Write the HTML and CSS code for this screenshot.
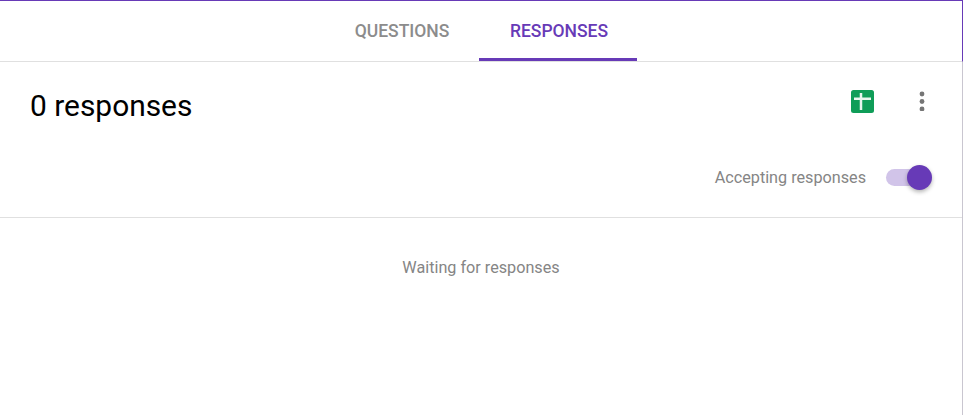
FILE: index.html
```html
<!DOCTYPE html>
<html lang="en">
<head>
    <meta charset="UTF-8">
    <title>Responses</title>
    <link rel="stylesheet" href="styles.css">
</head>
<body>
    <div class="page">
        <div class="tabs">
            <div class="tab tab-first">QUESTIONS</div>
            <div class="tab tab-active">RESPONSES</div>
        </div>
        <div class="summary">
            <div class="summary-top">
                <h1 class="count">0 responses</h1>
                <div class="actions">
                    <svg class="sheets-icon" width="23" height="23" viewBox="0 0 23 23">
                        <rect width="23" height="23" rx="2.5" fill="#0f9d58"/>
                        <path d="M3 7.5h5.75V3h2.5v4.5H20V10h-8.75v10h-2.5V10H3z" fill="#e8f5ee"/>
                    </svg>
                    <svg class="more-icon" width="6" height="20" viewBox="0 0 6 20">
                        <circle cx="3" cy="3" r="2.4" fill="#757575"/>
                        <circle cx="3" cy="10.5" r="2.4" fill="#757575"/>
                        <circle cx="3" cy="18" r="2.4" fill="#757575"/>
                    </svg>
                </div>
            </div>
            <div class="accepting">
                <span class="accepting-label">Accepting responses</span>
                <div class="switch">
                    <div class="switch-thumb"></div>
                </div>
            </div>
        </div>
        <div class="waiting">Waiting for responses</div>
    </div>
</body>
</html>
```

FILE: styles.css
```css
html, body {
    margin: 0;
    height: 100%;
}

body {
    background: #fff;
    font-family: Roboto, "Liberation Sans", sans-serif;
    overflow: hidden;
}

.page {
    height: 415px;
    box-sizing: border-box;
    border-right: 1px solid #c9c6d0;
}

.tabs {
    display: flex;
    justify-content: center;
    height: 62px;
    box-sizing: border-box;
    margin-right: -1px;
    padding-right: 4px;
    border-top: 1px solid #673ab7;
    border-right: 1px solid #673ab7;
    border-bottom: 1px solid #e0e0e0;
}

.tab {
    width: 158px;
    height: 60px;
    box-sizing: border-box;
    padding-top: 20px;
    text-align: center;
    font-size: 17.5px;
    line-height: 20px;
    font-weight: 500;
    color: #8c8c8c;
}

.tab-first {
    padding-left: 4px;
}

.tab-active {
    padding-left: 2px;
    color: #673ab7;
    border-bottom: 3px solid #673ab7;
}

.summary {
    height: 155px;
    padding: 0 29px 0 30px;
    border-bottom: 1px solid #e0e0e0;
}

.summary-top {
    display: flex;
    justify-content: space-between;
    height: 88px;
}

.count {
    margin: 27px 0 0;
    font-size: 29.9px;
    line-height: 34px;
    font-weight: 400;
    color: #000;
}

.actions {
    display: flex;
    align-items: flex-start;
    gap: 45px;
    padding-top: 28px;
}

.more-icon {
    margin-top: 1px;
    margin-right: 8px;
}

.accepting {
    display: flex;
    justify-content: flex-end;
    align-items: center;
    height: 34px;
    margin-top: 11px;
}

.accepting-label {
    font-size: 16.2px;
    line-height: 20px;
    color: #858585;
}

.switch {
    position: relative;
    width: 36px;
    height: 17px;
    margin-left: 20px;
    margin-right: 11px;
    margin-bottom: 2px;
    border-radius: 9px;
    background: #d1c4e9;
}

.switch-thumb {
    position: absolute;
    top: -4px;
    right: -10px;
    width: 25px;
    height: 25px;
    border-radius: 50%;
    background: #673ab7;
    box-shadow: 0 2px 4px rgba(0, 0, 0, 0.3);
}

.waiting {
    padding-top: 40px;
    text-align: center;
    font-size: 16.2px;
    line-height: 20px;
    color: #858585;
}
```
